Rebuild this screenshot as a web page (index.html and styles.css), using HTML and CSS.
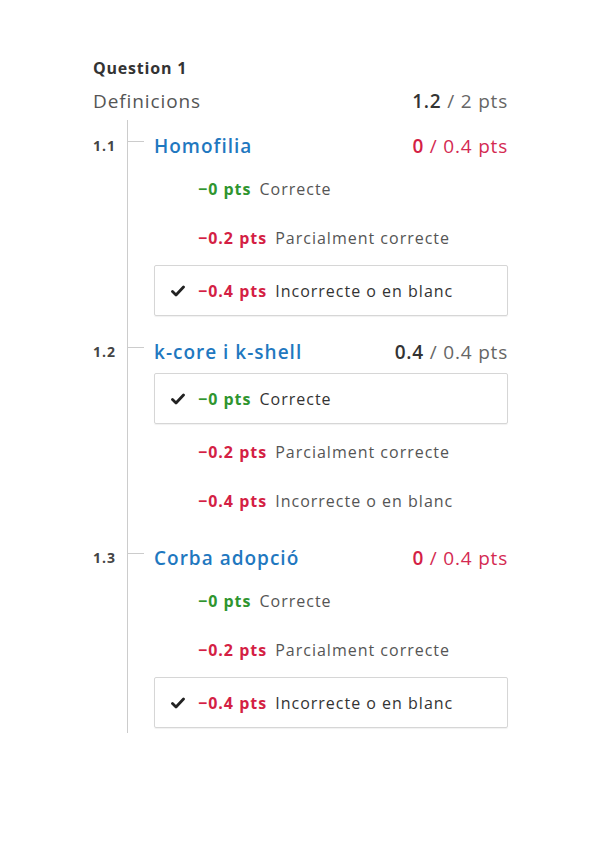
FILE: index.html
```html
<!DOCTYPE html>
<html lang="ca">
<head>
<meta charset="utf-8">
<title>Question 1</title>
<link rel="stylesheet" href="styles.css">
</head>
<body>
<div class="question">
  <div class="q-label">Question 1</div>
  <div class="q-head">
    <span class="q-title">Definicions</span>
    <span class="score"><b class="dark">1.2</b> / 2 pts</span>
  </div>
  <div class="subqs">
    <div class="subq">
      <div class="num">1.1</div>
      <div class="body">
        <div class="title-row">
          <span class="tick"></span>
          <span class="s-title">Homofilia</span>
          <span class="score red"><b>0</b> / 0.4 pts</span>
        </div>
        <div class="items">
          <div class="item"><span class="check"></span><span class="pts green">−0 pts</span><span class="desc">Correcte</span></div>
          <div class="item"><span class="check"></span><span class="pts red">−0.2 pts</span><span class="desc">Parcialment correcte</span></div>
          <div class="item selected"><span class="check"><svg viewBox="0 0 14 12" width="14" height="12"><path d="M1.5 6.5 L5 10 L12.5 2" fill="none" stroke="#222" stroke-width="2.8" stroke-linecap="round" stroke-linejoin="round"/></svg></span><span class="pts red">−0.4 pts</span><span class="desc">Incorrecte o en blanc</span></div>
        </div>
      </div>
    </div>
    <div class="subq">
      <div class="num">1.2</div>
      <div class="body">
        <div class="title-row">
          <span class="tick"></span>
          <span class="s-title">k-core i k-shell</span>
          <span class="score"><b class="dark">0.4</b> / 0.4 pts</span>
        </div>
        <div class="items">
          <div class="item selected"><span class="check"><svg viewBox="0 0 14 12" width="14" height="12"><path d="M1.5 6.5 L5 10 L12.5 2" fill="none" stroke="#222" stroke-width="2.8" stroke-linecap="round" stroke-linejoin="round"/></svg></span><span class="pts green">−0 pts</span><span class="desc">Correcte</span></div>
          <div class="item"><span class="check"></span><span class="pts red">−0.2 pts</span><span class="desc">Parcialment correcte</span></div>
          <div class="item"><span class="check"></span><span class="pts red">−0.4 pts</span><span class="desc">Incorrecte o en blanc</span></div>
        </div>
      </div>
    </div>
    <div class="subq last">
      <div class="num">1.3</div>
      <div class="body">
        <div class="title-row">
          <span class="tick"></span>
          <span class="s-title">Corba adopció</span>
          <span class="score red"><b>0</b> / 0.4 pts</span>
        </div>
        <div class="items">
          <div class="item"><span class="check"></span><span class="pts green">−0 pts</span><span class="desc">Correcte</span></div>
          <div class="item"><span class="check"></span><span class="pts red">−0.2 pts</span><span class="desc">Parcialment correcte</span></div>
          <div class="item selected"><span class="check"><svg viewBox="0 0 14 12" width="14" height="12"><path d="M1.5 6.5 L5 10 L12.5 2" fill="none" stroke="#222" stroke-width="2.8" stroke-linecap="round" stroke-linejoin="round"/></svg></span><span class="pts red">−0.4 pts</span><span class="desc">Incorrecte o en blanc</span></div>
        </div>
      </div>
    </div>
  </div>
</div>
</body>
</html>
```
FILE: styles.css
```css
* { box-sizing: border-box; }
html, body { margin: 0; padding: 0; background: #fff; }
body {
  font-family: "Open Sans", "Noto Sans", sans-serif;
  color: #555;
}
.question {
  padding: 57px 94px 0 93px;
}
.q-label {
  font-size: 16px;
  font-weight: 700;
  color: #333;
  line-height: 22px;
  letter-spacing: 0.8px;
}
.q-head {
  display: flex;
  justify-content: space-between;
  align-items: center;
  margin-top: 10px;
  line-height: 24px;
}
.q-title { font-size: 19px; color: #555; letter-spacing: 0.9px; }
.score { font-size: 19px; color: #666; letter-spacing: 0.8px; }
.score b { font-weight: 600; }
.score .dark { color: #333; }
.score.red { color: #d42a52; }
.score.red b { color: #d41f45; }

.subqs { margin-top: 7px; }
.subq {
  display: grid;
  grid-template-columns: 34px 1fr;
}
.num {
  font-size: 14px;
  font-weight: 700;
  color: #444;
  padding-top: 14px;
  line-height: 24px;
  letter-spacing: 1px;
}
.body {
  border-left: 1px solid #ccc;
  padding-top: 14px;
  padding-bottom: 7px;
}
.subq.last .body { padding-bottom: 2px; }
.title-row {
  display: flex;
  align-items: center;
  line-height: 24px;
  height: 24px;
}
.tick {
  width: 16px;
  height: 1px;
  background: #ccc;
  align-self: flex-start;
  margin-top: 7px;
  margin-right: 10px;
}
.s-title {
  font-size: 19px;
  font-weight: 600;
  color: #1f78c0;
  flex: 1;
  letter-spacing: 1px;
}
.items {
  margin-left: 26px;
  margin-top: 6px;
  display: flex;
  flex-direction: column;
}
.item {
  display: flex;
  align-items: center;
  height: 49px;
  padding-left: 16px;
  border: 1px solid transparent;
  font-size: 16px;
  letter-spacing: 1px;
}
.item.selected {
  height: 51px;
  margin: 3px 0;
  border-color: #d6d6d6;
  border-radius: 2px;
  box-shadow: 0 1px 1px rgba(0,0,0,0.06);
}
.check {
  width: 14px;
  height: 12px;
  margin-right: 13px;
  display: inline-flex;
}
.pts { font-weight: 700; margin-right: 8px; }
.pts.green { color: #2f952f; }
.pts.red { color: #d41f45; }
.desc { color: #555; }
.item.selected .desc { color: #333; }
```
